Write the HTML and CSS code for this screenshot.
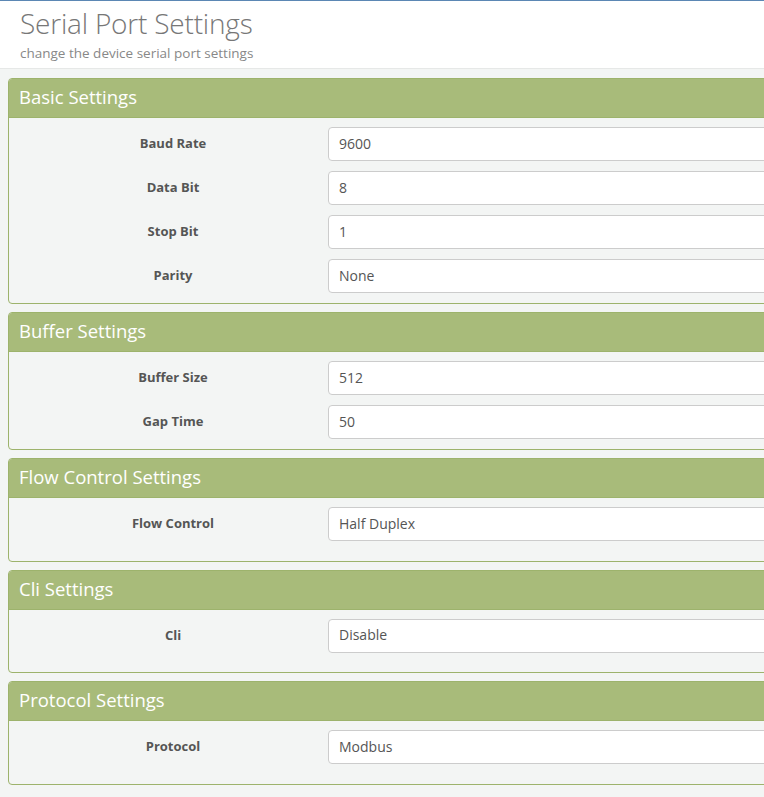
FILE: index.html
```html
<!DOCTYPE html>
<html lang="en">
<head>
  <meta charset="UTF-8">
  <meta name="viewport" content="width=device-width, initial-scale=1.0">
  <title>Serial Port Settings</title>
  <link rel="stylesheet" href="styles.css">
</head>
<body>
  <div class="page-header">
    <h1>Serial Port Settings</h1>
    <p class="sub">change the device serial port settings</p>
  </div>

  <div class="content">
    <div class="panel">
      <div class="panel-heading">Basic Settings</div>
      <div class="panel-body">
        <div class="form-group">
          <label>Baud Rate</label>
          <select><option>9600</option></select>
        </div>
        <div class="form-group">
          <label>Data Bit</label>
          <select><option>8</option></select>
        </div>
        <div class="form-group">
          <label>Stop Bit</label>
          <select><option>1</option></select>
        </div>
        <div class="form-group">
          <label>Parity</label>
          <select><option>None</option></select>
        </div>
      </div>
    </div>

    <div class="panel">
      <div class="panel-heading">Buffer Settings</div>
      <div class="panel-body">
        <div class="form-group">
          <label>Buffer Size</label>
          <input type="text" value="512" />
        </div>
        <div class="form-group">
          <label>Gap Time</label>
          <input type="text" value="50" />
        </div>
      </div>
    </div>

    <div class="panel">
      <div class="panel-heading">Flow Control Settings</div>
      <div class="panel-body">
        <div class="form-group">
          <label>Flow Control</label>
          <select><option>Half Duplex</option></select>
        </div>
      </div>
    </div>

    <div class="panel">
      <div class="panel-heading">Cli Settings</div>
      <div class="panel-body">
        <div class="form-group">
          <label>Cli</label>
          <select><option>Disable</option></select>
        </div>
      </div>
    </div>

    <div class="panel">
      <div class="panel-heading">Protocol Settings</div>
      <div class="panel-body">
        <div class="form-group">
          <label>Protocol</label>
          <select><option>Modbus</option></select>
        </div>
      </div>
    </div>
  </div>
</body>
</html>
```

FILE: styles.css
```css
html, body {
  overflow-x: hidden;
}

body {
  margin: 0;
  font-family: "Open Sans", "Noto Sans", Arial, sans-serif;
  background: #f3f5f4;
  border-top: 1px solid #5b87b4;
  color: #555;
}

.page-header {
  background: #fff;
  border-bottom: 1px solid #e6e8e7;
  padding: 4px 20px 6px;
  height: 57px;
}

.page-header h1 {
  margin: 0;
  font-size: 28px;
  font-weight: 300;
  color: #777;
  line-height: 36px;
  letter-spacing: -0.2px;
}

.page-header .sub {
  margin: 3px 0 0;
  font-size: 13.5px;
  color: #888;
  line-height: 18px;
}

.content {
  padding: 9px 0 0 8px;
}

.panel {
  width: 900px;
  border: 1px solid #9db36c;
  border-radius: 4px;
  margin-bottom: 8px;
  background: #f3f5f4;
  overflow: hidden;
}

.panel-heading {
  background: #a8bb7a;
  color: #fff;
  font-size: 18.5px;
  height: 38px;
  line-height: 36px;
  padding: 0 10px;
  border-bottom: 1px solid #9db36c;
}

.panel-body {
  padding: 9px 0 10px 9px;
  min-height: 43.5px;
}

.form-group {
  display: flex;
  align-items: center;
  margin-bottom: 10px;
}

.form-group:last-child {
  margin-bottom: 0;
}

.form-group label {
  width: 310px;
  text-align: center;
  font-weight: bold;
  font-size: 13px;
  line-height: 16px;
  padding-bottom: 2px;
  color: #555;
}

.form-group input,
.form-group select {
  flex: 1;
  height: 34px;
  box-sizing: border-box;
  border: 1px solid #ccc;
  border-radius: 4px;
  background: #fff;
  padding: 0 10px 2px;
  font-family: inherit;
  font-size: 14px;
  color: #555;
  appearance: none;
  -webkit-appearance: none;
  outline: none;
}
```
